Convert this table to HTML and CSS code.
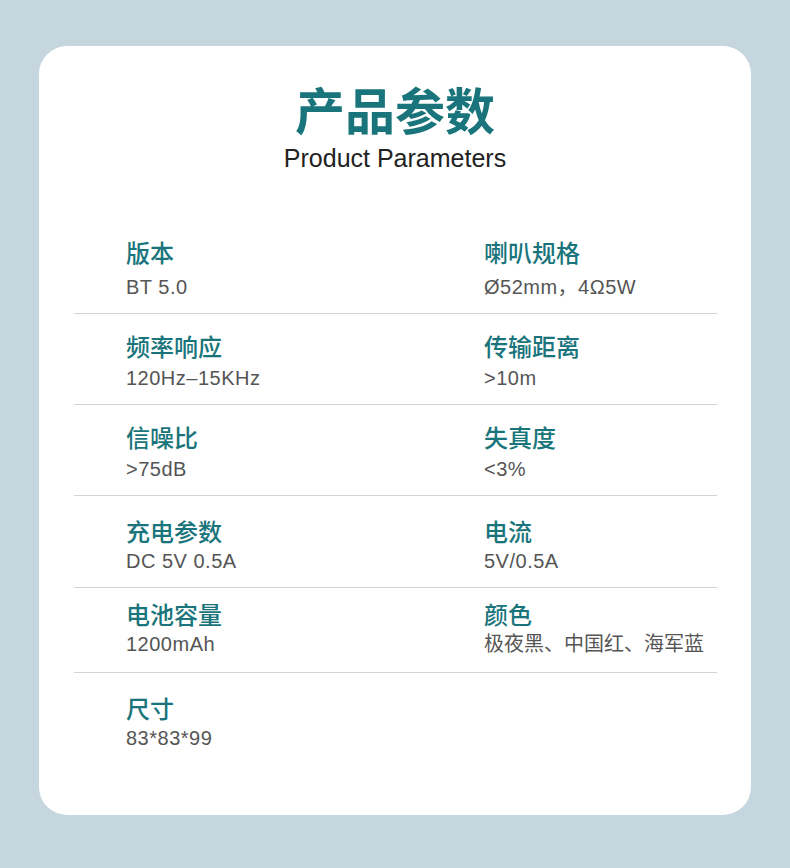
FILE: index.html
```html
<!DOCTYPE html>
<html lang="zh-CN">
<head>
<meta charset="utf-8">
<title>产品参数</title>
<link rel="stylesheet" href="styles.css">
</head>
<body>
<div class="card">
  <header class="head">
    <h1 class="title">产品参数</h1>
    <p class="subtitle">Product Parameters</p>
  </header>
  <div class="specs">
    <div class="row row--first">
      <div class="item"><div class="label">版本</div><div class="value">BT 5.0</div></div>
      <div class="item"><div class="label">喇叭规格</div><div class="value">Ø52mm，4Ω5W</div></div>
    </div>
    <div class="row">
      <div class="item"><div class="label">频率响应</div><div class="value">120Hz–15KHz</div></div>
      <div class="item"><div class="label">传输距离</div><div class="value">&gt;10m</div></div>
    </div>
    <div class="row">
      <div class="item"><div class="label">信噪比</div><div class="value">&gt;75dB</div></div>
      <div class="item"><div class="label">失真度</div><div class="value">&lt;3%</div></div>
    </div>
    <div class="row row--wide">
      <div class="item"><div class="label">充电参数</div><div class="value">DC 5V 0.5A</div></div>
      <div class="item"><div class="label">电流</div><div class="value">5V/0.5A</div></div>
    </div>
    <div class="row row--short">
      <div class="item"><div class="label">电池容量</div><div class="value">1200mAh</div></div>
      <div class="item"><div class="label">颜色</div><div class="value value--cjk">极夜黑、中国红、海军蓝</div></div>
    </div>
    <div class="row row--last">
      <div class="item"><div class="label">尺寸</div><div class="value">83*83*99</div></div>
    </div>
  </div>
</div>
</body>
</html>
```
FILE: styles.css
```css
* { box-sizing: border-box; }
html, body { margin: 0; padding: 0; }
body {
  background: #c6d6de;
  width: 790px;
  height: 868px;
  padding: 46px 39px 0 39px;
  font-family: "Liberation Sans", "Noto Sans CJK SC", sans-serif;
}
.card {
  background: #ffffff;
  border-radius: 28px;
  height: 769px;
  padding-top: 32px;
}
.head {
  text-align: center;
}
.title {
  margin: 0;
  font-family: "Noto Sans CJK SC", sans-serif;
  font-weight: 700;
  font-size: 50px;
  line-height: 60px;
  color: #19757b;
}
.subtitle {
  margin: 5px 0 0 0;
  font-family: "Liberation Sans", sans-serif;
  font-size: 25px;
  line-height: 30px;
  color: #222222;
}
.specs {
  margin: 50px 34px 0 35px;
}
.row {
  display: grid;
  grid-template-columns: 358px 1fr;
  padding: 17px 0 0 52px;
  height: 91px;
  border-bottom: 1px solid #d2d2d2;
}
.row--first { padding-top: 14px; }
.row--first .value { margin-top: 5px; }
.row--wide { padding-top: 20px; height: 92px; }
.row--wide .value { margin-top: 0; }
.row--short { padding-top: 11px; height: 85px; }
.row--short .value { margin-top: 0; }
.row--last { border-bottom: none; padding-top: 20px; }
.row--last .value { margin-top: 0; }
.label {
  font-family: "Noto Sans CJK SC", sans-serif;
  font-weight: 500;
  font-size: 24px;
  line-height: 30px;
  color: #19757b;
}
.value {
  margin-top: 2px;
  font-family: "Liberation Sans", "Noto Sans CJK SC", sans-serif;
  font-size: 20px;
  letter-spacing: 0.5px;
  line-height: 30px;
  color: #555555;
}
.value--cjk {
  letter-spacing: 0;
}
```
